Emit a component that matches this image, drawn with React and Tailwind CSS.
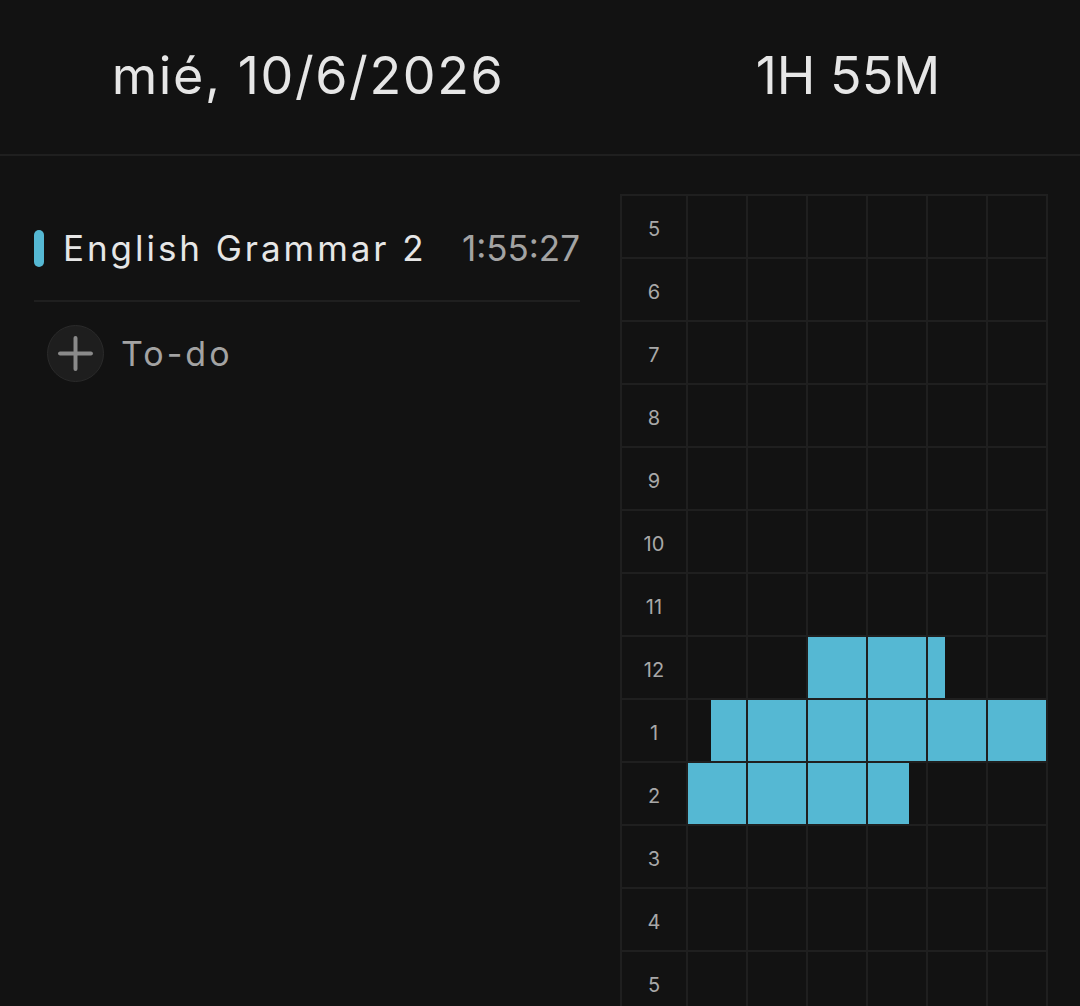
import { Plus } from "lucide-react";

const HOURS = [5, 6, 7, 8, 9, 10, 11, 12, 1, 2, 3, 4, 5];

// sessions in minutes since the first row (5:00)
const SESSIONS = [
  { start: 7 * 60 + 20, end: 7 * 60 + 43 },
  { start: 8 * 60 + 4, end: 9 * 60 + 37 },
];

function fillFor(rowIdx, colIdx) {
  const cStart = rowIdx * 60 + colIdx * 10;
  const cEnd = cStart + 10;
  for (const s of SESSIONS) {
    const a = Math.max(cStart, s.start);
    const b = Math.min(cEnd, s.end);
    if (b > a) {
      return { left: ((a - cStart) / 10) * 100, width: ((b - a) / 10) * 100 };
    }
  }
  return null;
}

function Cell({ rowIdx, colIdx }) {
  const fill = fillFor(rowIdx, colIdx);
  return (
    <div className="flex h-full bg-[#121212]">
      {fill && (
        <div
          className="h-full bg-[#55b8d3]"
          style={{ marginLeft: `${fill.left}%`, width: `${fill.width}%` }}
        />
      )}
    </div>
  );
}

export default function App() {
  return (
    <div
      className="w-[1080px] h-[1006px] overflow-hidden bg-[#121212] text-[#e6e6e6] flex flex-col"
      style={{ fontFamily: "Inter, 'Noto Sans', sans-serif" }}
    >
      {/* header */}
      <div className="h-[156px] shrink-0 flex items-center border-b-2 border-[#1f1f1f]">
        <div className="w-[616px] flex justify-center">
          <span className="text-[52px] leading-none tracking-[1.6px] pb-[2px]">mié, 10/6/2026</span>
        </div>
        <div className="flex-1 flex justify-center">
          <span className="text-[52px] leading-none pb-[2px]">1H 55M</span>
        </div>
      </div>

      <div className="flex flex-1 min-h-0">
        {/* left */}
        <div className="w-[620px] shrink-0 pl-[34px] pr-[40px] pt-[56px]">
          <div className="h-[72px] flex items-center">
            <div className="w-[10px] h-[37px] rounded-full bg-[#55b8d3]" />
            <span className="ml-[19px] text-[35px] leading-none tracking-[2.95px] text-[#e6e6e6]">English Grammar 2</span>
            <span className="ml-auto text-[35px] leading-none text-[#a3a3a3]">1:55:27</span>
          </div>
          <div className="mt-[16px] border-t-2 border-[#1f1f1f]" />
          <div className="mt-[23px] flex items-center">
            <div className="ml-[13px] w-[57px] h-[57px] rounded-full bg-[#1e1e1e] border border-[#2a2a2a] flex items-center justify-center">
              <Plus size={53} strokeWidth={1.8} className="text-[#8a8a8a]" />
            </div>
            <span className="ml-[17px] text-[34px] leading-none tracking-[3px] text-[#a3a3a3]">To-do</span>
          </div>
        </div>

        {/* right grid */}
        <div className="flex-1 pt-[38px]">
          <div className="w-[428px] bg-[#1f1f1f] p-[2px] grid grid-cols-[64px_repeat(6,58px)] auto-rows-[61px] gap-[2px]">
            {HOURS.map((h, r) => (
              <div key={r} className="contents">
                <div className="bg-[#121212] flex items-center justify-center pt-[4px] text-[20px] text-[#a8a8a8]">
                  {h}
                </div>
                {[0, 1, 2, 3, 4, 5].map((c) => (
                  <Cell key={c} rowIdx={r} colIdx={c} />
                ))}
              </div>
            ))}
          </div>
        </div>
      </div>
    </div>
  );
}
